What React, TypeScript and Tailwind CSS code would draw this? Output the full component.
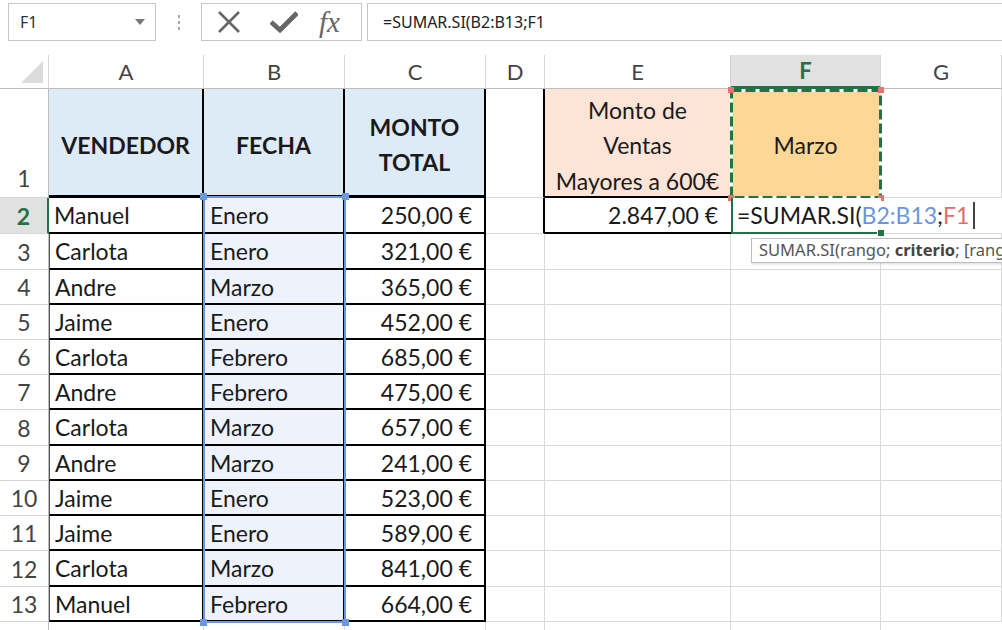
import React from 'react';

const CS = ['col-start-1', 'col-start-2', 'col-start-3', 'col-start-4', 'col-start-5', 'col-start-6', 'col-start-7', 'col-start-8'];
const RS = [
  'row-start-1', 'row-start-2', 'row-start-3', 'row-start-4', 'row-start-5',
  'row-start-6', 'row-start-7', 'row-start-8', 'row-start-9', 'row-start-10',
  'row-start-11', 'row-start-12', 'row-start-13', 'row-start-14', 'row-start-15',
];

const data: [string, string, string][] = [
  ['Manuel', 'Enero', '250,00 €'],
  ['Carlota', 'Enero', '321,00 €'],
  ['Andre', 'Marzo', '365,00 €'],
  ['Jaime', 'Enero', '452,00 €'],
  ['Carlota', 'Febrero', '685,00 €'],
  ['Andre', 'Febrero', '475,00 €'],
  ['Carlota', 'Marzo', '657,00 €'],
  ['Andre', 'Marzo', '241,00 €'],
  ['Jaime', 'Enero', '523,00 €'],
  ['Jaime', 'Enero', '589,00 €'],
  ['Carlota', 'Marzo', '841,00 €'],
  ['Manuel', 'Febrero', '664,00 €'],
];

function Cell({ c, r, className = '', children }: { c: number; r: number; className?: string; children?: React.ReactNode }) {
  return <div className={`${CS[c]} ${RS[r]} min-w-0 ${className}`}>{children}</div>;
}

const GRID = 'border-r border-b border-[#d9d9d9]';

function FormulaBar() {
  return (
    <div className="flex h-[55px] items-start pt-[3px] font-['Noto_Sans',sans-serif]">
      <div className="ml-[8px] flex h-[38px] w-[148px] items-center justify-between border border-[#c6c6c6] pl-[11px] pr-[10px]">
        <span className="text-[16px] text-[#333]">F1</span>
        <svg width="10" height="6" viewBox="0 0 10 6">
          <polygon points="0,0 10,0 5,6" fill="#777" />
        </svg>
      </div>
      <div className="flex h-[38px] w-[45px] flex-col items-center justify-center gap-[3px]">
        <span className="h-[3px] w-[2px] bg-[#aaa]" />
        <span className="h-[3px] w-[2px] bg-[#aaa]" />
        <span className="h-[3px] w-[2px] bg-[#aaa]" />
      </div>
      <div className="flex h-[38px] w-[161px] items-center border border-[#c6c6c6] pl-[15px]">
        <svg width="24" height="24" viewBox="0 0 24 24">
          <path d="M2 2 L22 22 M22 2 L2 22" stroke="#666" strokeWidth="2.6" fill="none" />
        </svg>
        <svg className="ml-[29px]" width="28" height="22" viewBox="0 0 28 22">
          <path d="M1 11 L10 19 L27 2" stroke="#666" strokeWidth="4.8" fill="none" strokeLinejoin="miter" />
        </svg>
        <span className="ml-[21px] font-['Liberation_Serif',serif] text-[29px] italic leading-none text-[#666]">fx</span>
      </div>
      <div className="ml-[5px] flex h-[38px] flex-1 items-center border border-r-0 border-[#c6c6c6] pl-[15px]">
        <span className="text-[16px] text-[#222]">=SUMAR.SI(B2:B13;F1</span>
      </div>
    </div>
  );
}

export default function App() {
  const letters = ['A', 'B', 'C', 'D', 'E', 'F', 'G'];
  return (
    <div className="h-[630px] w-[1002px] overflow-hidden bg-white font-['Lato',sans-serif] text-[#1a1a1a]">
      <FormulaBar />
      <div className="grid h-[575px] grid-cols-[49px_155px_141px_141px_59px_186px_150px_1fr] grid-rows-[34px_109px_36px_36px_35px_35px_35px_35px_36px_35px_35px_35px_36px_35px_1fr]">
        {/* corner */}
        <Cell c={0} r={0} className="flex items-end justify-end border-r border-b border-r-[#d4d4d4] border-b-[#bdbdbd] pb-[5px] pr-[5px]">
          <svg width="22" height="22" viewBox="0 0 22 22">
            <polygon points="22,0 22,22 0,22" fill="#dcdcdc" />
          </svg>
        </Cell>
        {letters.map((l, i) =>
          l === 'F' ? (
            <Cell key={l} c={i + 1} r={0} className="flex items-center justify-center border-r border-r-[#d4d4d4] border-b-[3px] border-b-[#217346] bg-[#e1e1e1] text-[22px] font-bold text-[#217346]">
              {l}
            </Cell>
          ) : (
            <Cell key={l} c={i + 1} r={0} className="flex items-center justify-center border-r border-b border-r-[#d4d4d4] border-b-[#bdbdbd] text-[22px] text-[#444]">
              {l}
            </Cell>
          )
        )}

        {/* row 1 */}
        <Cell c={0} r={1} className="flex items-end justify-center border-r border-b border-r-[#bdbdbd] border-b-[#d4d4d4] pb-[2px] text-[23px] text-[#444]">
          1
        </Cell>
        <Cell c={1} r={1} className="flex items-center justify-center border-r-2 border-b-[3px] border-black bg-[#ddebf7] pt-[6px] text-[23px] font-bold">
          VENDEDOR
        </Cell>
        <Cell c={2} r={1} className="flex items-center justify-center border-r-2 border-b-[3px] border-black bg-[#ddebf7] pt-[6px] text-[23px] font-bold">
          FECHA
        </Cell>
        <Cell c={3} r={1} className="flex items-center justify-center border-r-2 border-b-[3px] border-black bg-[#ddebf7] pt-[6px] text-center text-[23px] font-bold leading-[35px]">
          MONTO<br />TOTAL
        </Cell>
        <Cell c={4} r={1} className="border-r-2 border-b border-r-black border-b-[#d9d9d9]" />
        <Cell c={5} r={1} className="flex items-center justify-center border-b-2 border-r border-b-black border-r-[#d9d9d9] bg-[#fce4d6] pt-[7px] text-center text-[23px] leading-[35.5px]">
          Monto de<br />Ventas<br />Mayores a 600€
        </Cell>
        <Cell c={6} r={1} className="flex items-center justify-center border-r border-b border-[#d9d9d9] bg-[#fdd795] pt-[5px] text-[23px]">
          Marzo
        </Cell>
        <Cell c={7} r={1} className={GRID} />

        {/* data rows */}
        {data.map((row, i) => {
          const r = i + 2;
          const isActive = i === 0;
          return (
            <React.Fragment key={i}>
              {isActive ? (
                <Cell c={0} r={r} className="flex items-center justify-center border-r-2 border-b border-r-[#217346] border-b-[#d4d4d4] bg-[#e1e1e1] pt-[1px] text-[23px] font-bold text-[#217346]">
                  {i + 2}
                </Cell>
              ) : (
                <Cell c={0} r={r} className="flex items-center justify-center border-r border-b border-r-[#bdbdbd] border-b-[#d4d4d4] pt-[1px] text-[23px] text-[#444]">
                  {i + 2}
                </Cell>
              )}
              <Cell c={1} r={r} className={`flex items-center border-r-2 border-b-2 border-black pl-[5px] pt-[1px] text-[23px] ${isActive ? '' : 'border-l border-l-[#555]'}`}>
                {row[0]}
              </Cell>
              <Cell c={2} r={r} className="flex items-center border-r-2 border-b-2 border-black bg-[#edf2fb] pl-[6px] pt-[1px] text-[23px]">
                {row[1]}
              </Cell>
              <Cell c={3} r={r} className="flex items-center justify-end border-r-2 border-b-2 border-black pr-[12px] pt-[1px] text-[23px]">
                {row[2]}
              </Cell>
              {i === 0 ? (
                <>
                  <Cell c={4} r={r} className="border-r-2 border-b border-r-black border-b-[#d9d9d9]" />
                  <Cell c={5} r={r} className="flex items-center justify-end border-b-2 border-b-black pr-[13px] pt-[1px] text-[23px]">
                    2.847,00 €
                  </Cell>
                  <Cell c={6} r={r} className="relative z-10 flex items-center overflow-visible whitespace-nowrap border-l-2 border-b-2 border-[#217346] bg-white pl-[4px] pt-[1px] text-[23px]">
                    <span className="shrink-0">=SUMAR.SI(</span>
                    <span className="shrink-0 text-[#6a96de]">B2:B13</span>
                    <span className="shrink-0">;</span>
                    <span className="shrink-0 text-[#e26b6b]">F1</span>
                    <span className="ml-[4px] inline-block h-[27px] w-[2px] shrink-0 bg-[#444]" />
                    <span className="absolute -bottom-[5px] -right-[4px] h-[8px] w-[8px] border border-white bg-[#217346]" />
                    <div className="absolute left-[18px] top-[40px] z-20 flex h-[25px] items-center whitespace-nowrap border border-[#bdbdbd] bg-white px-[7px] font-['Noto_Sans',sans-serif] text-[16.5px] text-[#555] shadow-[1px_1px_2px_rgba(0,0,0,0.15)]">
                      <span>SUMAR.SI(rango;&nbsp;</span>
                      <b className="text-[#444]">criterio</b>
                      <span>; [rango_suma])</span>
                    </div>
                  </Cell>
                  <Cell c={7} r={r} className="border-b border-[#d9d9d9]" />
                </>
              ) : (
                <>
                  <Cell c={4} r={r} className={GRID} />
                  <Cell c={5} r={r} className={GRID} />
                  <Cell c={6} r={r} className={GRID} />
                  <Cell c={7} r={r} className={GRID} />
                </>
              )}
            </React.Fragment>
          );
        })}

        {/* partial last row */}
        <Cell c={0} r={14} className="border-r border-r-[#bdbdbd]" />
        <Cell c={1} r={14} className="border-r border-[#d9d9d9]" />
        <Cell c={2} r={14} className="border-r border-[#d9d9d9]" />
        <Cell c={3} r={14} className="border-r border-[#d9d9d9]" />
        <Cell c={4} r={14} className="border-r border-[#d9d9d9]" />
        <Cell c={5} r={14} className="border-r border-[#d9d9d9]" />
        <Cell c={6} r={14} className="border-r border-[#d9d9d9]" />
        <Cell c={7} r={14} />

        {/* B2:B13 reference highlight */}
        <div className="pointer-events-none relative col-start-3 row-start-3 row-span-12 -mb-[1px] -ml-[1px] -mr-[1px] -mt-[2px] border-2 border-[#6e98dd]">
          <span className="absolute -left-[5px] -top-[5px] h-[7px] w-[7px] bg-[#6e98dd]" />
          <span className="absolute -right-[5px] -top-[5px] h-[7px] w-[7px] bg-[#6e98dd]" />
          <span className="absolute -bottom-[5px] -left-[5px] h-[7px] w-[7px] bg-[#6e98dd]" />
          <span className="absolute -bottom-[5px] -right-[5px] h-[7px] w-[7px] bg-[#6e98dd]" />
        </div>

        {/* F1 marching ants */}
        <div className="pointer-events-none relative col-start-7 row-start-2 -mb-[1px] -ml-[1px] -mr-[1px]">
          <svg className="absolute inset-0" width="152" height="110" viewBox="0 0 152 110">
            <rect x="1.5" y="1.5" width="149" height="107" fill="none" stroke="#ffffff" strokeWidth="3" />
            <rect x="1.5" y="1.5" width="149" height="107" fill="none" stroke="#217346" strokeWidth="3" strokeDasharray="10 4" />
          </svg>
          <span className="absolute -left-[2px] -top-[2px] h-[6px] w-[6px] bg-[#e57373]" />
          <span className="absolute -right-[2px] -top-[2px] h-[6px] w-[6px] bg-[#e57373]" />
          <span className="absolute -bottom-[2px] -left-[2px] h-[6px] w-[6px] bg-[#e57373]" />
          <span className="absolute -bottom-[2px] -right-[2px] h-[6px] w-[6px] bg-[#e57373]" />
        </div>
      </div>
    </div>
  );
}
